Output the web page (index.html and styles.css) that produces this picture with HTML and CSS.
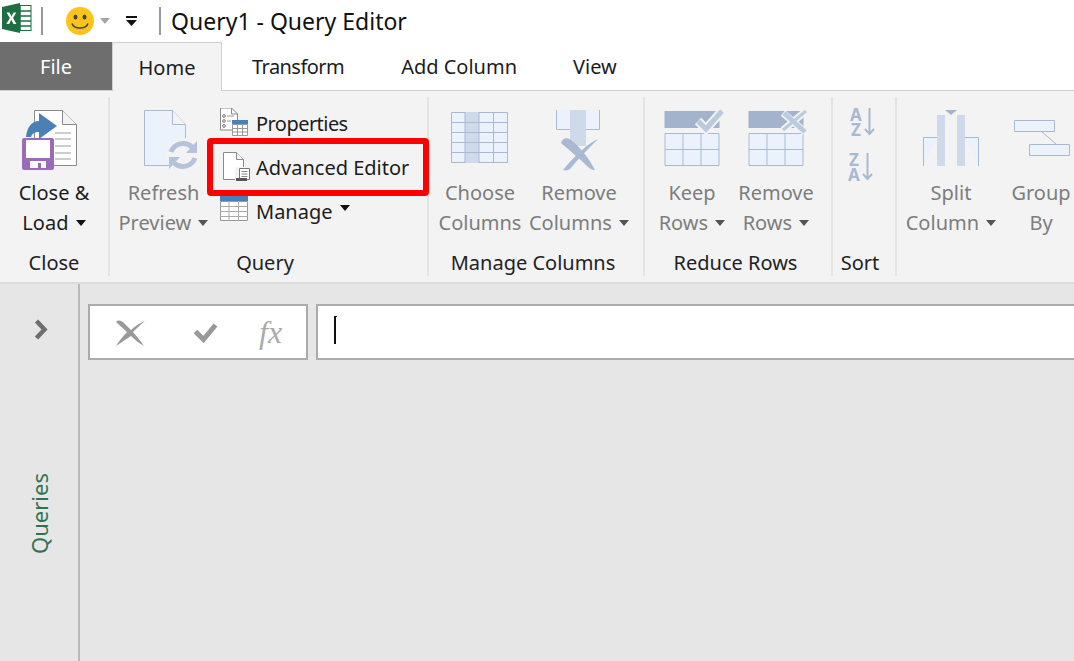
FILE: index.html
```html
<!DOCTYPE html>
<html lang="en">
<head>
    <meta charset="UTF-8">
    <title>Query1 - Query Editor</title>
    <link rel="stylesheet" href="styles.css">
</head>
<body>
    <div class="titlebar">
        <svg class="excel-icon" width="31" height="32" viewBox="0 0 31 32">
            <rect x="11" y="3.500" width="19" height="25" fill="#fff" stroke="#1d6f42"/>
            <path d="M19 4v24M12 9h18M12 14h18M12 19h18M12 24h18" stroke="#1d6f42" stroke-width="1.500"/>
            <path d="M1 5L19 1v30L1 27z" fill="#1d6f42"/>
            <path d="M5.500 10.500h3l2 4 2-4h2.800l-3.300 5.500 3.500 6h-3l-2.200-4.200-2.200 4.200H5.300l3.600-6z" fill="#fff"/>
        </svg>
        <span class="title-sep sep-first"></span>
        <svg class="smiley" width="28" height="28" viewBox="0 0 28 28">
            <circle cx="14" cy="14" r="14" fill="#fcc419"/>
            <ellipse cx="9.500" cy="10" rx="2" ry="2.600" fill="#444"/>
            <ellipse cx="18.500" cy="10" rx="2" ry="2.600" fill="#444"/>
            <path d="M6 16.500c2 6 14 6 16 0" fill="none" stroke="#444" stroke-width="1.600"/>
        </svg>
        <span class="qat-arrow"></span>
        <svg class="qat-custom" width="11" height="10" viewBox="0 0 11 10">
            <path d="M0 0h11v2H0zM0 4h11L5.500 10z" fill="#111"/>
        </svg>
        <span class="title-sep sep-second"></span>
        <span class="title-text">Query1 - Query Editor</span>
    </div>

    <div class="tabs">
        <div class="tab tab-file">File</div>
        <div class="tab tab-active">Home</div>
        <div class="tab tab-transform tight">Transform</div>
        <div class="tab tab-column">Add Column</div>
        <div class="tab tab-view">View</div>
    </div>

    <div class="ribbon">
        <div class="group group-close">
            <div class="group-body">
                <div class="big-btn">
                    <svg class="big-icon" width="60" height="60" viewBox="0 0 60 60">
                        <path d="M10.500.500h28l14 14v41h-42z" fill="#fff" stroke="#8a8a8a"/>
                        <path d="M38.500.500v14h14" fill="#f3f3f3" stroke="#8a8a8a"/>
                        <path d="M31 23h16M31 29h16M31 36h16M31 43h16M31 49h16" stroke="#bdbdbd" stroke-width="1.500"/>
                        <path d="M15 3l18 13-18 13v-7c-5 0-7 2-8 5H2C3 17 8 11 15 11z" fill="#4a80b8"/>
                        <rect x="-2" y="28" width="32" height="32" rx="2" fill="#9a6bb8"/>
                        <path d="M2 30h24v18H2z" fill="#fff"/>
                        <path d="M6 51h16v7h-5v-5h-3v5H6z" fill="#fff"/>
                    </svg>
                    <span class="big-label">Close &amp;</span>
                    <span class="big-label">Load <i class="caret"></i></span>
                </div>
            </div>
            <div class="group-label">Close</div>
        </div>

        <div class="group group-query">
            <div class="group-body">
                <div class="big-btn btn-refresh off">
                    <svg class="big-icon" width="60" height="60" viewBox="0 0 60 60">
                        <path d="M10.500.500h28l13 14v41h-41z" fill="#ecf2fb" stroke="#a9b9d2"/>
                        <path d="M38.500.500v14h13" fill="#f3f3f3" stroke="#a9b9d2"/>
                        <circle cx="49" cy="45" r="17" fill="#f3f3f3"/>
                        <path d="M37 42A13 13 0 0 1 58 37" fill="none" stroke="#b4c3d9" stroke-width="5"/>
                        <path d="M63 31v12H52z" fill="#b4c3d9"/>
                        <path d="M61 48A13 13 0 0 1 40 53" fill="none" stroke="#b4c3d9" stroke-width="5"/>
                        <path d="M35 59V47h11z" fill="#b4c3d9"/>
                    </svg>
                    <span class="big-label">Refresh</span>
                    <span class="big-label">Preview <i class="caret"></i></span>
                </div>
                <div class="small-stack">
                    <div class="small-btn">
                        <svg width="30" height="30" viewBox="0 0 30 30">
                            <path d="M1.500 0h11l6 6v16h-17z" fill="#fff" stroke="#8a8a8a"/>
                            <path d="M12.500 0v6h6" fill="none" stroke="#8a8a8a"/>
                            <circle cx="5" cy="8" r="1.300" fill="none" stroke="#777"/>
                            <circle cx="5" cy="13" r="1.300" fill="none" stroke="#777"/>
                            <circle cx="5" cy="18" r="1.300" fill="none" stroke="#777"/>
                            <path d="M8 8h7M8 13h4" stroke="#999"/>
                            <path d="M13 12h16v4H13z" fill="#4a80b8"/>
                            <path d="M13.500 16.500h15v11h-15z" fill="#fff" stroke="#999"/>
                            <path d="M18.500 16v12M23.500 16v12M13 20.500h16M13 24h16" stroke="#999"/>
                        </svg>
                        <span class="tight">Properties</span>
                    </div>
                    <div class="small-btn">
                        <svg width="32" height="30" viewBox="0 0 32 30">
                            <path d="M4.500 .500h13l7 7v20h-20z" fill="#fff" stroke="#8a8a8a"/>
                            <path d="M17.500 .500v7h7" fill="#f3f3f3" stroke="#8a8a8a"/>
                            <path d="M16 15h16v15H16z" fill="#f3f3f3"/>
                            <path d="M20.500 16.500h10v11h-10z" fill="#fff" stroke="#777"/>
                            <path d="M22.500 19.500h6M22.500 22h6M22.500 24.500h6" stroke="#888"/>
                            <path d="M17 26h11v3H17z" fill="#555"/>
                        </svg>
                        <span class="editor-text">Advanced Editor</span>
                        <i class="highlight"></i>
                    </div>
                    <div class="small-btn">
                        <svg width="30" height="30" viewBox="0 0 30 30">
                            <path d="M1 0h28v5H1z" fill="#4a80b8"/>
                            <path d="M1.500 5.500h27v19h-27z" fill="#fff" stroke="#999"/>
                            <path d="M1 10.500h28M1 15.500h28M1 20.500h28M10 5v20M19.500 5v20" stroke="#aaa"/>
                        </svg>
                        <span>Manage<i class="caret caret-up"></i></span>
                    </div>
                </div>
            </div>
            <div class="group-label">Query</div>
        </div>

        <div class="group group-columns">
            <div class="group-body">
                <div class="big-btn off btn-choose">
                    <svg class="big-icon" width="60" height="60" viewBox="0 0 60 60">
                        <path d="M1.500 2.500h56v50h-56z" fill="#ecf2fb" stroke="#a9b9d2"/>
                        <path d="M15 2h14v51H15z" fill="#ced9e9"/>
                        <path d="M15 2v51M29 2v51M43.500 2v51M1 12.500h57M1 22.500h57M1 32.500h57M1 42.500h57" stroke="#a9b9d2"/>
                    </svg>
                    <span class="big-label">Choose</span>
                    <span class="big-label">Columns</span>
                </div>
                <div class="big-btn off btn-remove-col">
                    <svg class="big-icon" width="60" height="60" viewBox="0 0 60 60">
                        <path d="M7.500 0v19.500h43V0" fill="#ecf2fb" stroke="#a9b9d2"/>
                        <path d="M21 0h16v36H21z" fill="#ced9e9"/>
                        <path d="M12 33c1-5 6-6 10-3 8 6 18 18 24 30-3 0-5-1-7-3-9-9-18-16-27-24z" fill="#a9b9d2"/>
                        <path d="M49 29c-9 4-22 15-35 31 3 1 6 0 8-2 7-9 16-18 27-29z" fill="#a9b9d2"/>
                    </svg>
                    <span class="big-label">Remove</span>
                    <span class="big-label">Columns <i class="caret"></i></span>
                </div>
            </div>
            <div class="group-label">Manage Columns</div>
        </div>

        <div class="group group-rows">
            <div class="group-body">
                <div class="big-btn off btn-keep">
                    <svg class="big-icon" width="60" height="60" viewBox="0 0 60 60">
                        <path d="M2.500 1h55v17h-55z" fill="#a3b3cc"/>
                        <path d="M3 23.500h54v32H3zM21 23v33M39 23v33M3 39.500h54" fill="#ecf2fb" stroke="#a9b9d2"/>
                        <path d="M36 11l8 8L60 1" fill="none" stroke="#f3f3f3" stroke-width="9"/>
                        <path d="M36 11l8 8L60 1" fill="none" stroke="#bccadd" stroke-width="5"/>
                    </svg>
                    <span class="big-label">Keep</span>
                    <span class="big-label">Rows <i class="caret"></i></span>
                </div>
                <div class="big-btn off btn-remove-row">
                    <svg class="big-icon" width="60" height="60" viewBox="0 0 60 60">
                        <path d="M2.500 1h55v17h-55z" fill="#a3b3cc"/>
                        <path d="M3 23.500h54v32H3zM21 23v33M39 23v33M3 39.500h54" fill="#ecf2fb" stroke="#a9b9d2"/>
                        <path d="M37 3l22 19M60 1L37 20" fill="none" stroke="#f3f3f3" stroke-width="7"/>
                        <path d="M38 3l21 19" fill="none" stroke="#bccadd" stroke-width="5"/>
                        <path d="M60 1L37 20" fill="none" stroke="#bccadd" stroke-width="3"/>
                    </svg>
                    <span class="big-label">Remove</span>
                    <span class="big-label">Rows <i class="caret"></i></span>
                </div>
            </div>
            <div class="group-label">Reduce Rows</div>
        </div>

        <div class="group group-sort">
            <div class="group-body">
                <div class="sort-stack">
                    <div class="sort-btn">
                        <span class="sort-letters">A<br>Z</span>
                        <svg width="11" height="28" viewBox="0 0 11 28"><path d="M5.500 0v26M1 21l4.500 5 4.500-5" fill="none" stroke="#a9b9d2" stroke-width="2"/></svg>
                    </div>
                    <div class="sort-btn sort-down">
                        <span class="sort-letters">Z<br>A</span>
                        <svg width="11" height="28" viewBox="0 0 11 28"><path d="M5.500 0v26M1 21l4.500 5 4.500-5" fill="none" stroke="#a9b9d2" stroke-width="2"/></svg>
                    </div>
                </div>
            </div>
            <div class="group-label">Sort</div>
        </div>

        <div class="group group-transform">
            <div class="group-body">
                <div class="big-btn off btn-split">
                    <svg class="big-icon" width="60" height="60" viewBox="0 0 60 60">
                        <path d="M16 27.500H2.500V56M44 27.500h13.500V56" fill="#ecf2fb" stroke="#a9b9d2"/>
                        <path d="M16 5h8v51h-8zM36 5h8v51h-8z" fill="#ced9e9"/>
                        <path d="M24 0h12l-6 5z" fill="#a3b3cc"/>
                    </svg>
                    <span class="big-label">Split</span>
                    <span class="big-label">Column <i class="caret"></i></span>
                </div>
                <div class="big-btn off btn-group">
                    <svg class="big-icon" width="60" height="60" viewBox="0 0 60 60">
                        <path d="M3.500 10.500h40v11h-40zM18.500 34.500h40v11h-40z" fill="#ecf2fb" stroke="#a9b9d2"/>
                        <path d="M31 22l14 12" stroke="#a9b9d2"/>
                    </svg>
                    <span class="big-label">Group</span>
                    <span class="big-label">By</span>
                </div>
            </div>
        </div>
    </div>

    <div class="workspace">
        <div class="queries-pane">
            <svg class="chevron" width="15" height="21" viewBox="0 0 15 21">
                <path d="M2.500 2l8 8.500-8 8.500" fill="none" stroke="#6e6e6e" stroke-width="4.500"/>
            </svg>
            <div class="queries-label">Queries</div>
        </div>
        <div class="formula-bar">
            <div class="formula-buttons">
                <svg width="31" height="27" viewBox="0 0 31 27">
                    <path d="M1 3c3-3 6-1 9 2l6 6C20 7 25 4 30 2c-5 4-9 8-12 11 4 5 8 9 11 14-5-3-9-6-13-10-5 3-10 7-15 10 3-5 7-10 11-14z" fill="#999"/>
                </svg>
                <svg class="check" width="25" height="21" viewBox="0 0 25 21">
                    <path d="M2.500 9.500l8 8L22.500 3" fill="none" stroke="#999" stroke-width="5"/>
                </svg>
                <span class="fx">fx</span>
            </div>
            <div class="formula-input"><span class="cursor"></span></div>
        </div>
    </div>
</body>
</html>
```

FILE: styles.css
```css
* {
    box-sizing: border-box;
}
html, body {
    height: 100%;
}
body {
    margin: 0;
    width: 1074px;
    height: 661px;
    overflow: hidden;
    display: flex;
    flex-direction: column;
    background: #fff;
    color: #1c1c1c;
    font-family: "Noto Sans", "Open Sans", sans-serif;
    font-size: 20px;
}
.tight {
    letter-spacing: -0.55px;
}

/* title bar */
.titlebar {
    height: 42px;
    display: flex;
    align-items: center;
    padding-left: 1px;
    flex: none;
}
.excel-icon {
    margin-top: -6px;
}
.title-sep {
    width: 2px;
    height: 28px;
    background: #9a9a9a;
}
.sep-first {
    margin-left: 9px;
}
.smiley {
    margin-left: 23px;
}
.qat-arrow {
    margin-left: 6px;
    border: 5.500px solid transparent;
    border-top: 6px solid #a5a5a5;
    border-bottom: 0;
}
.qat-custom {
    margin-left: 16px;
}
.sep-second {
    margin-left: 22px;
}
.title-text {
    margin-left: 10px;
    font-size: 23px;
    color: #111;
}

/* tabs */
.tabs {
    height: 49px;
    display: flex;
    flex: none;
    border-bottom: 1px solid #cfcfcf;
}
.tab {
    height: 48px;
    display: flex;
    align-items: center;
    justify-content: center;
}
.tab-file {
    width: 112px;
    background: #6e6e6e;
    color: #fff;
}
.tab-active {
    width: 110px;
    height: 49px;
    background: #f3f3f3;
    border: 1px solid #cfcfcf;
    border-bottom: 0;
}
.tab-transform {
    margin-left: 30px;
}
.tab-column {
    margin-left: 57px;
}
.tab-view {
    margin-left: 56px;
}

/* ribbon */
.ribbon {
    height: 193px;
    display: flex;
    flex: none;
    background: #f3f3f3;
    border-bottom: 2px solid #dcdcdc;
    padding-top: 6px;
    overflow: hidden;
}
.group {
    height: 179px;
    display: flex;
    flex-direction: column;
    flex: none;
    border-right: 2px solid #e4e4e4;
}
.group-body {
    flex: 1;
    display: flex;
    padding-top: 13px;
}
.group-label {
    height: 26px;
    text-align: center;
    line-height: 26px;
    color: #222;
}
.group-close { width: 110px; }
.group-query { width: 319px; }
.group-query .group-label { padding-right: 7px; }
.group-columns { width: 216px; }
.group-columns .group-label { padding-right: 6px; }
.group-rows { width: 188px; }
.group-rows .group-label { padding-right: 5px; }
.group-sort { width: 64px; }
.group-sort .group-label { padding-right: 8px; }
.group-transform {
    width: 177px;
    border-right: 0;
}

.big-btn {
    display: flex;
    flex-direction: column;
    align-items: center;
    flex: none;
}
.big-icon {
    margin-bottom: 8px;
    overflow: visible;
}
.big-label {
    height: 30px;
    line-height: 30px;
    white-space: nowrap;
}
.off .big-label {
    color: #7d7d7d;
}
.caret {
    display: inline-block;
    margin-left: 2px;
    vertical-align: 4px;
    border: 5.500px solid transparent;
    border-top: 6px solid #111;
    border-bottom: 0;
}
.off .caret {
    border-top-color: #555;
}
.caret-up {
    margin-left: 7px;
    vertical-align: 8px;
}

.group-close .big-btn { width: 108px; }
.btn-refresh { width: 99px; margin-left: 4px; }
.btn-choose { width: 100px; margin-left: 1px; }
.btn-remove-col { width: 98px; }
.btn-keep { width: 84px; margin-left: 5px; }
.btn-remove-row { width: 84px; }
.btn-split { width: 108px; }
.btn-group { width: 60px; margin-left: 6px; }

.small-stack {
    display: flex;
    flex-direction: column;
    margin-left: 6px;
    margin-top: -9px;
}
.small-btn {
    height: 44px;
    display: flex;
    align-items: center;
    gap: 7px;
    position: relative;
    white-space: nowrap;
}
.editor-text {
    margin-left: -2px;
}
.highlight {
    position: absolute;
    left: -12px;
    top: -7px;
    width: 222px;
    height: 58px;
    border: 6px solid #f00;
    border-radius: 4px;
}

.sort-stack {
    display: flex;
    flex-direction: column;
    gap: 16px;
    margin-top: -2px;
    padding-left: 17px;
}
.sort-btn {
    display: flex;
    align-items: flex-start;
    gap: 2px;
}
.sort-down {
    margin-left: -2px;
}
.sort-letters {
    margin-top: -1px;
    font-size: 17px;
    line-height: 15px;
    font-weight: 700;
    text-align: center;
    color: #a9b9d2;
}

/* formula area */
.workspace {
    flex: 1;
    display: flex;
    background: #e6e6e6;
}
.queries-pane {
    width: 80px;
    flex: none;
    border-right: 2px solid #b9b9b9;
    display: flex;
    flex-direction: column;
    align-items: center;
    padding-top: 35px;
}
.chevron {
    margin-left: 4px;
}
.queries-label {
    margin-top: 133px;
    writing-mode: vertical-rl;
    transform: rotate(180deg);
    font-size: 22px;
    color: #2f7352;
}
.formula-bar {
    flex: 1;
    display: flex;
    gap: 8px;
    align-items: flex-start;
    padding: 20px 0 0 8px;
    min-width: 0;
}
.formula-buttons {
    width: 220px;
    height: 56px;
    flex: none;
    display: flex;
    align-items: center;
    padding-left: 25px;
    background: #fff;
    border: 2px solid #ababab;
}
.check {
    margin-left: 47px;
}
.fx {
    margin-left: 41px;
    font-family: "Liberation Serif", serif;
    font-style: italic;
    font-size: 32px;
    color: #aaa;
}
.formula-input {
    flex: 1;
    height: 56px;
    margin-right: -4px;
    padding: 10px 0 0 16px;
    background: #fff;
    border: 2px solid #ababab;
}
.cursor {
    display: block;
    position: relative;
    width: 1.500px;
    height: 28px;
    background: #111;
}
.cursor::after {
    content: "";
    position: absolute;
    left: 0;
    top: 0;
    width: 3px;
    height: 1px;
    background: #111;
}
```
